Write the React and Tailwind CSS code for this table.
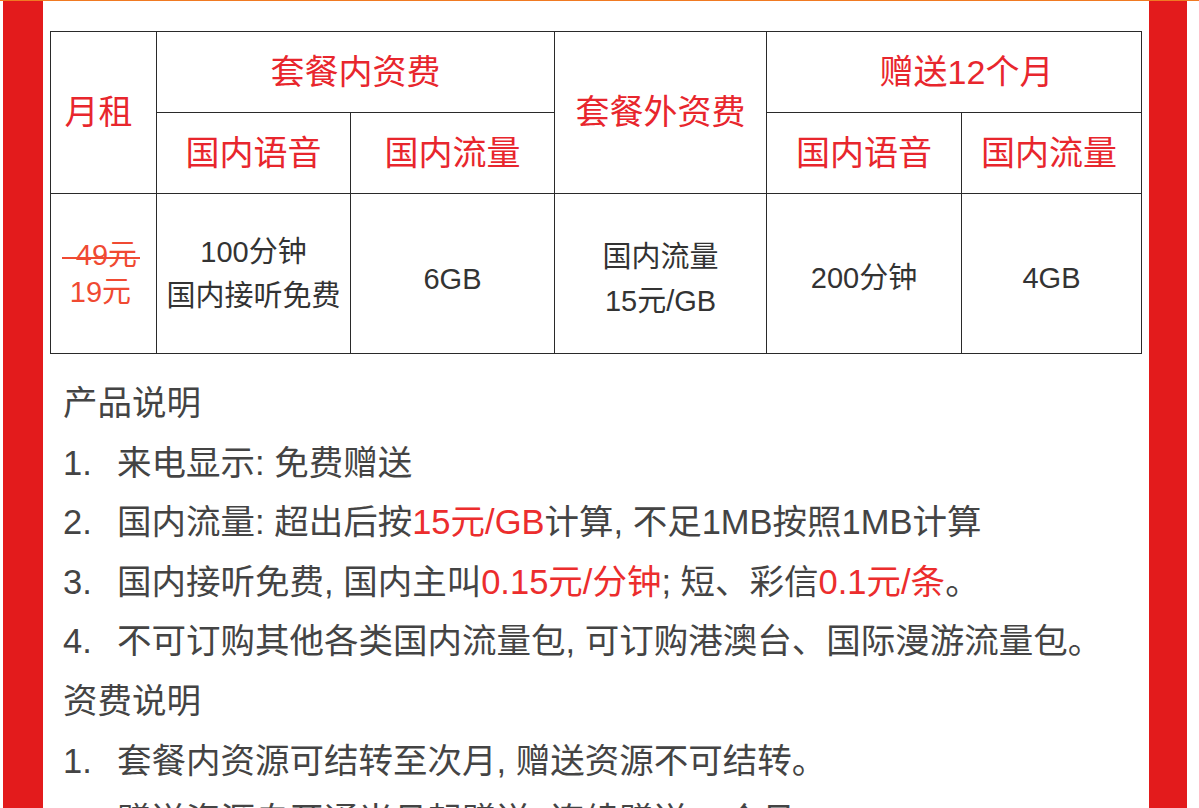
const red = "text-[#e8262d]";

function HeadCell({ children, className = "" }) {
  return (
    <div
      className={`bg-white flex items-center justify-center text-[34px] ${red} ${className}`}
    >
      {children}
    </div>
  );
}

function BodyCell({ children, className = "" }) {
  return (
    <div
      className={`bg-white flex flex-col items-center justify-center text-[29px] leading-[44px] text-[#333] ${className}`}
    >
      {children}
    </div>
  );
}

function Item({ num, children }) {
  return (
    <div className="flex">
      <span className="w-[54px] shrink-0">{num}</span>
      <span>{children}</span>
    </div>
  );
}

const R = ({ children }) => <span className="text-[#ec2d2d]">{children}</span>;

export default function App() {
  return (
    <div
      className="w-[1199px] h-[808px] overflow-hidden bg-white"
      style={{ fontFamily: '"Liberation Sans", "Noto Sans CJK SC", sans-serif' }}
    >
      <div className="h-px bg-[#f07a22]" />
      <div className="flex h-[807px]">
        <div className="w-[3px]" />
        <div className="w-[40px] bg-[#e31b1c]" />
        <main className="flex-1 pl-[7px] pr-[7px] pt-[30px]">
          <div className="grid grid-cols-[105px_193px_203px_211px_194px_179px] grid-rows-[80px_80px_159px] gap-px p-px bg-[#2a2a2a] w-[1092px]">
            <HeadCell className="row-span-2 pr-[10px]">月租</HeadCell>
            <HeadCell className="col-span-2">套餐内资费</HeadCell>
            <HeadCell className="row-span-2">套餐外资费</HeadCell>
            <HeadCell className="col-span-2 pl-[25px]">赠送12个月</HeadCell>
            <HeadCell>国内语音</HeadCell>
            <HeadCell>国内流量</HeadCell>
            <HeadCell>国内语音</HeadCell>
            <HeadCell className="pr-[5px]">国内流量</HeadCell>

            <div className="bg-white flex flex-col items-center justify-center text-[29px] leading-[37px] text-[#f04a32]">
              <span className="relative ml-[6px]">
                49元
                <span className="absolute left-[-14px] right-[-3px] top-[20px] h-[2px] bg-[#f04a32]" />
              </span>
              <span className="mr-[6px]">19元</span>
            </div>
            <BodyCell className="pt-[1px]">
              <span>100分钟</span>
              <span>国内接听免费</span>
            </BodyCell>
            <BodyCell className="pt-[10px]">
              <span>6GB</span>
            </BodyCell>
            <BodyCell className="pt-[11px]">
              <span>国内流量</span>
              <span>15元/GB</span>
            </BodyCell>
            <BodyCell className="pt-[8px]">
              <span>200分钟</span>
            </BodyCell>
            <BodyCell className="pt-[8px]">
              <span>4GB</span>
            </BodyCell>
          </div>

          <div className="mt-[20px] pl-[13px] text-[34.5px] leading-[59.6px] text-[#444] whitespace-nowrap">
            <div>产品说明</div>
            <Item num="1.">来电显示: 免费赠送</Item>
            <Item num="2.">
              国内流量: 超出后按<R>15元/GB</R>计算, 不足1MB按照1MB计算
            </Item>
            <Item num="3.">
              国内接听免费, 国内主叫<R>0.15元/分钟</R>; 短、彩信<R>0.1元/条</R>。
            </Item>
            <Item num="4.">
              不可订购其他各类国内流量包, 可订购港澳台、国际漫游流量包。
            </Item>
            <div>资费说明</div>
            <Item num="1.">套餐内资源可结转至次月, 赠送资源不可结转。</Item>
            <Item num="2.">赠送资源自开通当月起赠送, 连续赠送12个月。</Item>
          </div>
        </main>
        <div className="w-[38px] bg-[#e31b1c]" />
        <div className="w-[12px]" />
      </div>
    </div>
  );
}
